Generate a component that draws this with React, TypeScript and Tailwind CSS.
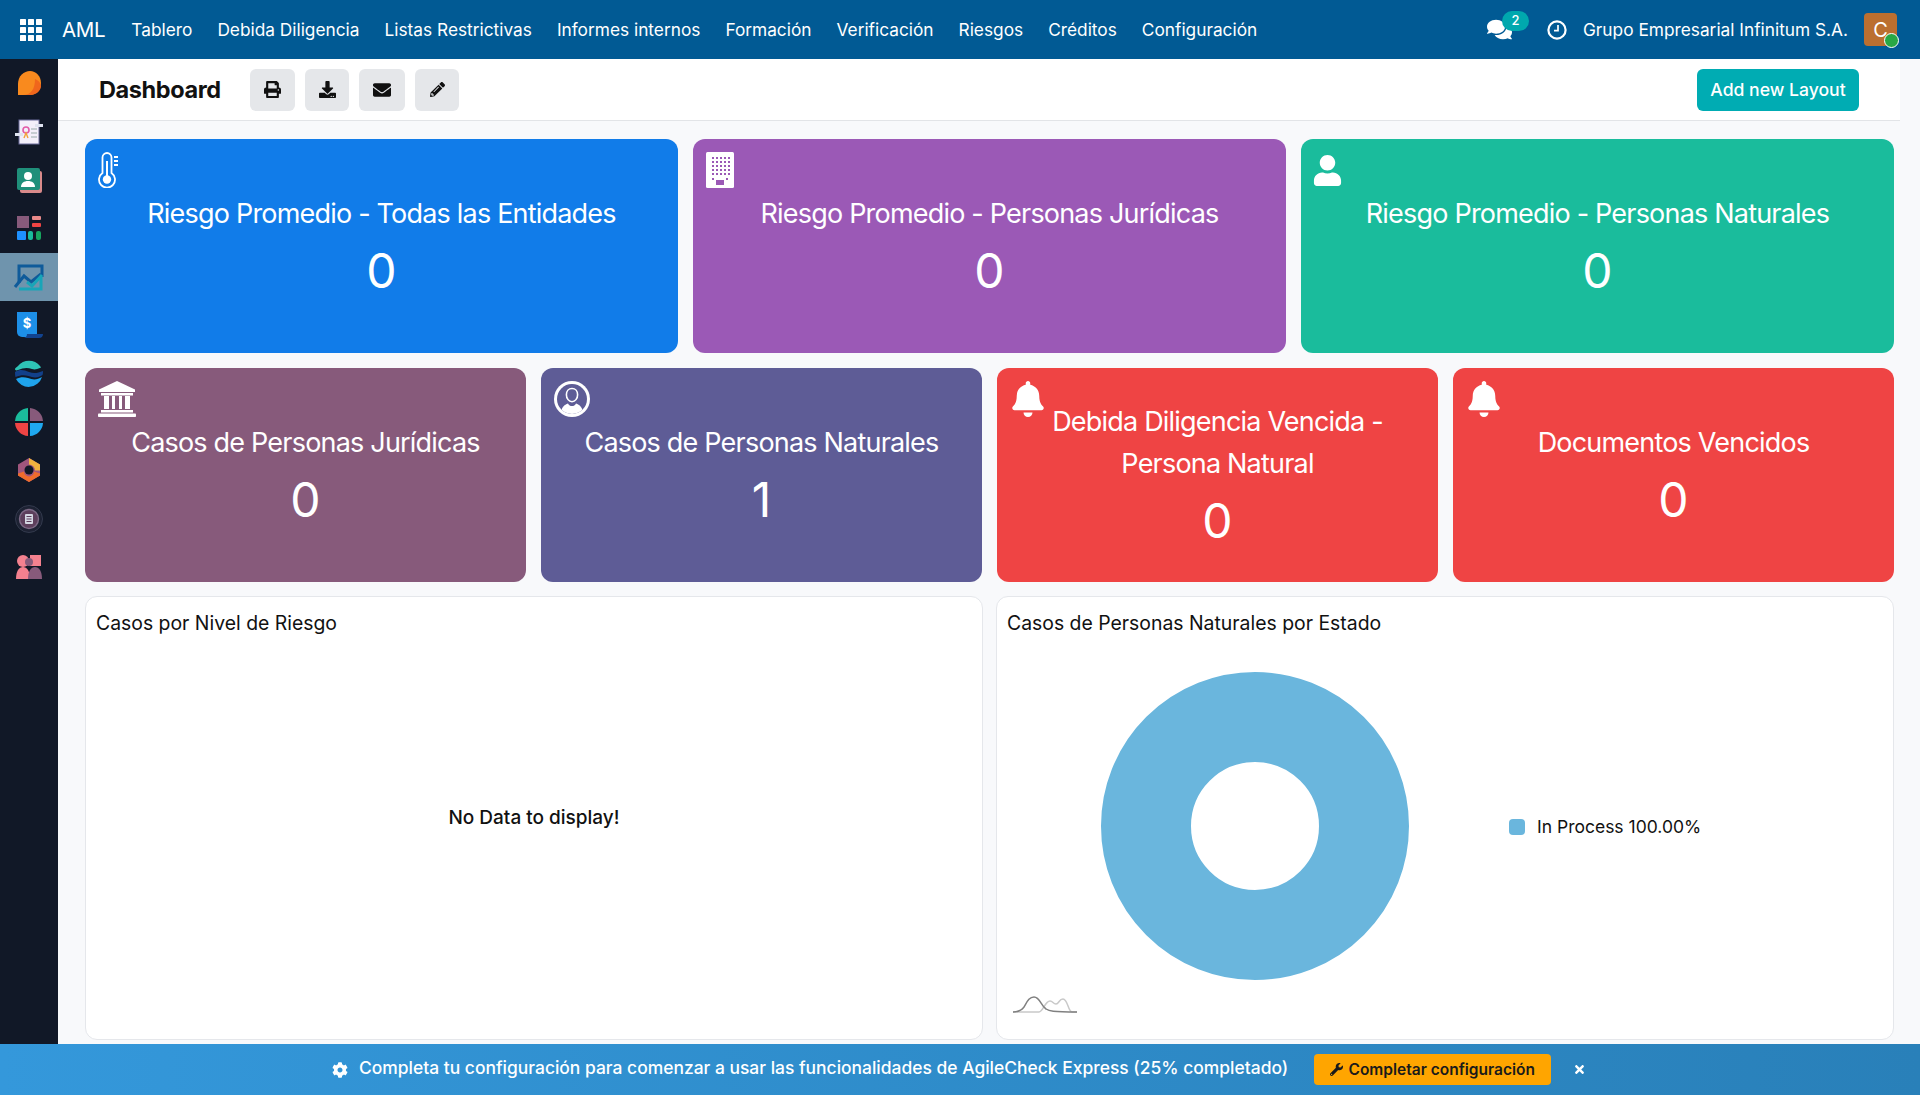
import React from "react";
import {
	FaPrint,
	FaDownload,
	FaEnvelope,
	FaPencilAlt,
	FaComments,
	FaUser,
	FaBell,
	FaCog,
	FaWrench,
	FaTimes,
} from "react-icons/fa";

const NAV = [
	"Tablero",
	"Debida Diligencia",
	"Listas Restrictivas",
	"Informes internos",
	"Formación",
	"Verificación",
	"Riesgos",
	"Créditos",
	"Configuración",
];

const AppsIcon = () => (
	<svg viewBox="0 0 22 22" className="w-[22px] h-[22px]" fill="#fff">
		{[0, 8, 16].map((y) =>
			[0, 8, 16].map((x) => <rect key={`${x}-${y}`} x={x} y={y} width="6" height="6" rx="0.6" />),
		)}
	</svg>
);

const ClockIcon = () => (
	<svg viewBox="0 0 20 20" className="w-5 h-5" fill="none" stroke="#fff">
		<circle cx="10" cy="10" r="8.6" strokeWidth="2.2" />
		<path d="M11 5v5.6H7" strokeWidth="1.7" />
	</svg>
);

const ThermometerIcon = () => (
	<svg viewBox="0 0 20 36" className="w-5 h-9" fill="none" stroke="#fff">
		<path d="M4.500 21V5.500a4.500 4.500 0 0 1 9 0V21a8 8 0 1 1-9 0Z" strokeWidth="1.800" />
		<circle cx="9" cy="27.500" r="4.200" fill="#fff" stroke="none" />
		<path d="M9 9v16" strokeWidth="2" />
		<path d="M16 5h4M16 9h4M16 13h4" strokeWidth="2" />
	</svg>
);

const BankIcon = () => (
	<svg viewBox="0 0 38 36" className="w-[38px] h-9" fill="#fff">
		<path d="M19 0l18 8.500v2.500H1V8.500Z" />
		<rect x="3" y="12" width="32" height="2.500" />
		<path d="M6 15h5v13H6ZM14 15h3v13h-3ZM21 15h3v13h-3ZM27 15h5v13h-5Z" />
		<rect x="3" y="29" width="32" height="2.500" />
		<rect x="0" y="32.500" width="38" height="3.500" rx="0.8" />
	</svg>
);

const BuildingIcon = ({ bg }: { bg: string }) => (
	<svg viewBox="0 0 28 36" className="w-7 h-9">
		<rect width="28" height="36" rx="1.5" fill="#fff" />
		{[5, 9, 13, 17, 21].map((y) =>
			[6, 10, 14, 18, 22].map((x) => (
				<rect key={`${x}-${y}`} x={x} y={y} width="2" height="2" fill={bg} />
			)),
		)}
		<rect x="6" y="26" width="2" height="2" fill={bg} />
		<rect x="20" y="26" width="2" height="2" fill={bg} />
		<rect x="10" y="28" width="8" height="5" fill={bg} />
	</svg>
);

const UserCircleIcon = ({ bg }: { bg: string }) => (
	<svg viewBox="0 0 36 36" className="w-9 h-9">
		<circle cx="18" cy="18" r="18" fill="#fff" />
		<circle cx="18" cy="18" r="15" fill={bg} />
		<clipPath id="uc">
			<circle cx="18" cy="18" r="15" />
		</clipPath>
		<g clipPath="url(#uc)" fill="#fff">
			<path d="M18 7.500c3.400 0 5.600 2.700 5.600 6.200 0 3.800-2.500 7-5.600 7s-5.600-3.200-5.600-7c0-3.500 2.200-6.200 5.600-6.200Z" fill="none" stroke="#fff" strokeWidth="1.600" />
			<path d="M7 33c0-6.500 3.500-9.500 7-10.500 1 2 2.300 2.600 4 2.600s3-.6 4-2.600c3.500 1 7 4 7 10.500Z" />
		</g>
	</svg>
);

const StatCard = ({
	title,
	value,
	bg,
	icon,
}: {
	title: string;
	value: string;
	bg: string;
	icon: React.ReactNode;
}) => (
	<div className={`relative h-[214px] rounded-xl ${bg} text-white flex flex-col justify-center items-center text-center px-10`}>
		<div className="absolute left-[13px] top-[13px] text-white">{icon}</div>
		<div className="pt-[1px] text-[27px] leading-[42px] tracking-[-0.8px]">{title}</div>
		<div className="mt-[6px] text-[48px] leading-[60px]">{value}</div>
	</div>
);

const ToolButton = ({ children, w }: { children: React.ReactNode; w: string }) => (
	<button className={`h-[42px] ${w} rounded-md bg-[#e5e7ea] flex items-center justify-center text-[#111] text-[17px]`}>
		{children}
	</button>
);

// sidebar app logos, drawn by hand
const LOGOS: React.ReactNode[] = [
	<svg key="1" viewBox="0 0 28 28" className="w-7 h-7">
		<path d="M3 26V15C3 7 9 2 15 2c6 0 11 5 11 12 0 7-5 12-11 12Z" fill="#f98a1e" />
		<path d="M8 26c8 0 12-6 12-16 4 2 6 4 6 8-1 5-6 8-11 8Z" fill="#f0661c" />
	</svg>,
	<svg key="2" viewBox="0 0 28 28" className="w-7 h-7">
		<rect x="4" y="2" width="20" height="24" fill="#f3effa" stroke="#6a6a9a" />
		<path d="M0 15h8v3H0Z" fill="#dfe3f0" />
		<path d="M20 6h8v3h-8Z" fill="#dfe3f0" />
		<circle cx="11" cy="12" r="3" fill="none" stroke="#e35ca8" strokeWidth="1.600" />
		<path d="M9 20l2-5 2 5" fill="none" stroke="#f2a33a" strokeWidth="1.400" />
		<path d="M16 11h6M16 15h6M16 19h6" stroke="#9aa" strokeWidth="1" />
	</svg>,
	<svg key="3" viewBox="0 0 28 28" className="w-7 h-7">
		<rect x="5" y="5" width="22" height="22" rx="2" fill="#d98a8a" />
		<rect x="2" y="2" width="23" height="22" rx="2" fill="#1f8f7a" />
		<circle cx="13" cy="10" r="4" fill="#fff" />
		<path d="M6 21c0-4 3-6 7-6s7 2 7 6Z" fill="#fff" />
	</svg>,
	<svg key="4" viewBox="0 0 28 28" className="w-7 h-7">
		<rect x="2" y="2" width="12" height="12" fill="#875a7b" />
		<rect x="17" y="2" width="9" height="4" rx="1" fill="#e98a8a" />
		<rect x="17" y="9" width="9" height="4" rx="1" fill="#ef4444" />
		<rect x="2" y="17" width="9" height="9" rx="1" fill="#1e90ff" />
		<rect x="13" y="17" width="5" height="9" rx="2" fill="#1abc9c" />
		<rect x="21" y="17" width="5" height="9" rx="2" fill="#17a55f" />
	</svg>,
	<svg key="5" viewBox="0 0 32 28" className="w-8 h-7" fill="none">
		<path d="M6 20V3h23v11" stroke="#0f5b9a" strokeWidth="3" />
		<path d="M2 24l9-11 7 6 10-8" stroke="#0f5b9a" strokeWidth="3" />
		<path d="M6 26h22V14" stroke="#18a5b8" strokeWidth="3" />
		<path d="M14 19l5 4 10-11" stroke="#18a5b8" strokeWidth="3" />
	</svg>,
	<svg key="6" viewBox="0 0 28 28" className="w-7 h-7">
		<path d="M2 1h20v25H7a5 5 0 0 1-5-5Z" fill="#1d8fe8" />
		<path d="M8 27c2.500 0 4-1.500 4-4h16c0 2.500-1.500 4-4 4Z" fill="#12438f" />
		<text x="12" y="17" textAnchor="middle" fontSize="13" fontWeight="700" fill="#fff" fontFamily="Inter, sans-serif">$</text>
	</svg>,
	<svg key="7" viewBox="0 0 28 28" className="w-7 h-7">
		<path d="M3 6a14 14 0 0 1 22 0c1 1 1 2 0 2-3 1-5 2-8 1-5-2-9-1-14 1-2 1-3 0-3-1 0-1 2-2 3-3Z" fill="#2ec4b6" />
		<path d="M0 12c5-3 9-2 14 0 5 2 9 1 14-1l0 1c0 .8-.2 2-.5 3-4 3-9 3-14 1-4-1-8-1-13 1-.3-1-.5-3-.5-5Z" fill="#12408a" />
		<path d="M1 19c4-2 8-2 12-1 5 2 9 2 14-1a14 14 0 0 1-26 2Z" fill="#1fa3ec" />
	</svg>,
	<svg key="8" viewBox="0 0 28 28" className="w-7 h-7">
		<path d="M13 0v13H0A14 14 0 0 1 13 0Z" fill="#1abc9c" />
		<path d="M15 0v13h13A14 14 0 0 0 15 0Z" fill="#875a7b" />
		<path d="M13 28V15H0a14 14 0 0 0 13 13Z" fill="#ef4444" />
		<path d="M15 28V15h13a14 14 0 0 1-13 13Z" fill="#1fa8f0" />
	</svg>,
	<svg key="9" viewBox="0 0 28 28" className="w-7 h-7">
		<path d="M14 2l11 6.500v11L14 26 3 19.500v-11Z" fill="#a0567d" />
		<path d="M14 2l11 6.500v6H20a6 6 0 0 0-6-6Z" fill="#f2b23e" />
		<path d="M3 17.500l6-2a5 5 0 0 0 10 0l6 2v2L14 26 3 19.500Z" fill="#ef6c2c" />
		<circle cx="14" cy="14" r="4.500" fill="#111827" />
	</svg>,
	<svg key="10" viewBox="0 0 28 28" className="w-7 h-7">
		<circle cx="14" cy="14" r="13.500" fill="#1d2233" stroke="#333a4d" />
		<circle cx="14" cy="14" r="9.500" fill="#5d3f5c" stroke="#7d6a86" strokeWidth="1.400" />
		<rect x="10" y="9" width="8" height="10" rx="1" fill="#d4d7e2" />
		<path d="M11.500 11.500h5M11.500 14h5M11.500 16.500h5" stroke="#5d3f5c" />
	</svg>,
	<svg key="11" viewBox="0 0 28 28" className="w-7 h-7">
		<circle cx="8" cy="8" r="6" fill="#f4818f" />
		<path d="M1 26c0-8 3-12 7-12s7 4 7 12Z" fill="#f4818f" />
		<rect x="15" y="2" width="11" height="11" fill="#f4818f" />
		<path d="M13 26c0-8 3-12 7-12s7 4 7 12Z" fill="#875a7b" />
		<circle cx="14" cy="9" r="4" fill="#875a7b" />
	</svg>,
];

const App = () => {
	return (
		<div className="w-[1920px] h-[1095px] overflow-hidden flex flex-col bg-[#f8f9fb] font-['Inter',sans-serif] text-[#111]">
			{/* top nav */}
			<header className="h-[59px] shrink-0 bg-[#015a94] text-white flex items-center pl-5 pr-[23px]">
				<AppsIcon />
				<span className="ml-5 text-[20.5px] tracking-[-0.3px] pt-[1px]">AML</span>
				<nav className="ml-[26px] flex items-center gap-[25px] text-[17.3px] pt-[1px]">
					{NAV.map((n) => (
						<span key={n}>{n}</span>
					))}
				</nav>
				<div className="ml-auto flex items-center">
					<div className="relative w-[42px] h-8 flex items-center">
						<FaComments size={25} />
						<span className="absolute left-[15px] -top-[3px] w-[27px] h-5 rounded-full bg-[#00a8ae] text-[13px] font-medium flex items-center justify-center">
							2
						</span>
					</div>
					<div className="ml-[18px]">
						<ClockIcon />
					</div>
					<span className="ml-4 text-[17.3px] pt-[1px]">Grupo Empresarial Infinitum S.A.</span>
					<div className="relative ml-[16px] w-[33px] h-[33px] rounded-[4px] bg-[#bb6f30] flex items-center justify-center text-[20px]">
						C
						<span className="absolute -right-[2px] -bottom-[2px] w-[15px] h-[15px] rounded-full bg-[#28a745] border border-white" />
					</div>
				</div>
			</header>

			<div className="flex-1 min-h-0 flex">
				{/* app sidebar */}
				<aside className="w-[58px] shrink-0 bg-[#111827] flex flex-col">
					{LOGOS.map((logo, i) => (
						<div
							key={i}
							className={`h-[48.4px] flex items-center justify-center ${i === 4 ? "bg-[#6f94ad]" : ""}`}
						>
							{logo}
						</div>
					))}
				</aside>

				<main className="flex-1 min-w-0 flex flex-col">
					{/* dashboard header */}
					<div className="h-[62px] shrink-0 mr-5 bg-white border-b border-[#e2e4e7] flex items-center pl-[41px] pr-[41px]">
						<h1 className="text-[23.5px] font-bold w-[151px] tracking-[-0.4px]">Dashboard</h1>
						<div className="flex items-center gap-[10px]">
							<ToolButton w="w-[45px]">
								<FaPrint />
							</ToolButton>
							<ToolButton w="w-[44px]">
								<FaDownload />
							</ToolButton>
							<ToolButton w="w-[46px]">
								<FaEnvelope size={18} />
							</ToolButton>
							<ToolButton w="w-[44px]">
								<FaPencilAlt size={15} />
							</ToolButton>
						</div>
						<button className="ml-auto h-[42px] w-[162px] pt-[1px] rounded-md bg-[#00acb3] text-white text-[17.6px] font-medium">
							Add new Layout
						</button>
					</div>

					<div className="flex-1 min-h-0 pt-[18px] pl-[27px] pr-[26px] flex flex-col gap-[15px]">
						<div className="grid grid-cols-3 gap-[15px]">
							<StatCard title="Riesgo Promedio - Todas las Entidades" value="0" bg="bg-[#117ce9]" icon={<ThermometerIcon />} />
							<StatCard title="Riesgo Promedio - Personas Jurídicas" value="0" bg="bg-[#9b59b6]" icon={<BuildingIcon bg="#9b59b6" />} />
							<StatCard title="Riesgo Promedio - Personas Naturales" value="0" bg="bg-[#1abc9c]" icon={<FaUser size={31} className="mt-[3px] -ml-[2px]" />} />
						</div>
						<div className="grid grid-cols-4 gap-[15px]">
							<StatCard title="Casos de Personas Jurídicas" value="0" bg="bg-[#875a7b]" icon={<BankIcon />} />
							<StatCard title="Casos de Personas Naturales" value="1" bg="bg-[#5e5c96]" icon={<UserCircleIcon bg="#5e5c96" />} />
							<StatCard title="Debida Diligencia Vencida - Persona Natural" value="0" bg="bg-[#ef4444]" icon={<FaBell size={36} />} />
							<StatCard title="Documentos Vencidos" value="0" bg="bg-[#ef4444]" icon={<FaBell size={36} />} />
						</div>
						<div className="grid grid-cols-2 gap-[13px] -mt-px">
							<div className="h-[444px] bg-white rounded-xl border border-[#e5e7eb] flex flex-col">
								<div className="h-[54px] shrink-0 pl-[10px] flex items-center text-[19.4px]">Casos por Nivel de Riesgo</div>
								<div className="flex-1 pb-[54px] flex items-center justify-center text-[19px] font-medium">
									No Data to display!
								</div>
							</div>
							<div className="relative h-[444px] bg-white rounded-xl border border-[#e5e7eb] flex flex-col">
								<div className="h-[54px] shrink-0 pl-[10px] flex items-center text-[19.4px]">
									Casos de Personas Naturales por Estado
								</div>
								<div className="pt-[21px] pl-[104px] flex items-center">
									<svg viewBox="0 0 308 308" className="w-[308px] h-[308px]">
										<circle cx="154" cy="154" r="109" fill="none" stroke="#6ab6dd" strokeWidth="90" />
									</svg>
									<div className="ml-[100px] pt-[2px] flex items-center gap-3 text-[17.5px]">
										<span className="w-4 h-4 rounded-[4px] bg-[#6ab6dd]" />
										In Process 100.00%
									</div>
								</div>
								<svg viewBox="0 0 64 18" className="absolute left-[16px] bottom-[26px] w-16 h-[18px]" fill="none">
									<path d="M0 17h26c4 0 6-11 11-11 3 0 3 3 6 3 3 0 3-5 7-5 5 0 5 13 9 13h5" stroke="#c9c9c9" strokeWidth="1.500" />
									<path d="M0 17c5 0 8-1 11-5 3-5 5-10 10-10 6 0 7 9 12 12 3 2 6 3 31 3" stroke="#808080" strokeWidth="1.500" />
								</svg>
							</div>
						</div>
					</div>
				</main>
			</div>

			{/* setup banner */}
			<div className="h-[51px] shrink-0 bg-gradient-to-r from-[#3498db] to-[#2980b9] text-white flex items-center pl-[332px]">
				<FaCog size={16} />
				<span className="ml-[11px] text-[17.45px] font-medium pb-[2px]">
					Completa tu configuración para comenzar a usar las funcionalidades de AgileCheck Express (25% completado)
				</span>
				<button className="ml-[26px] w-[237px] h-[31px] rounded-[4px] bg-[#ffa500] text-[#1a1a1a] text-[15.5px] font-semibold flex items-center justify-center gap-[5px]">
					<FaWrench size={13} />
					Completar configuración
				</button>
				<FaTimes size={13} className="ml-[22px]" />
			</div>
		</div>
	);
};

export default App;
